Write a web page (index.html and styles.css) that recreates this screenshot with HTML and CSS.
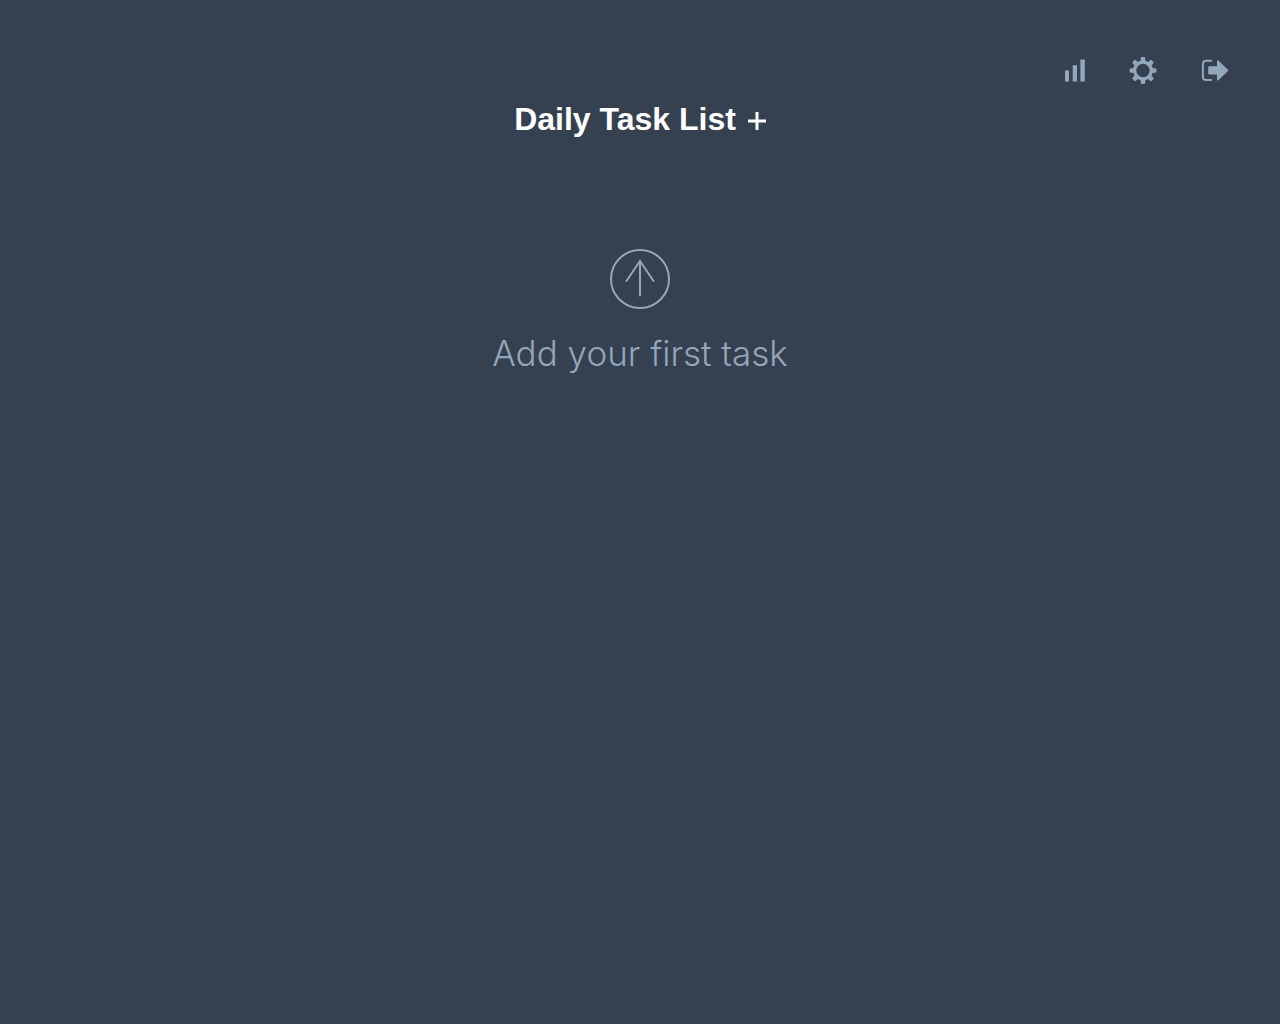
FILE: index.html
```html
<!DOCTYPE html>
<html lang="en">
<head>
<meta charset="utf-8">
<meta name="viewport" content="width=device-width, initial-scale=1">
<title>Daily Task List</title>
<link rel="stylesheet" href="styles.css">
</head>
<body>
<nav class="toolbar" aria-label="Main">
  <button class="icon-button" type="button" aria-label="Statistics">
    <svg width="20" height="28" viewBox="0 0 20 28" fill="currentColor" aria-hidden="true">
      <path d="M0 14.5h4v11H0zM7.7 9.2h4.3v16.3H7.7zM15.4 3.6h4.4v21.9h-4.4z"/>
    </svg>
  </button>
  <button class="icon-button" type="button" aria-label="Settings">
    <svg width="28" height="28" viewBox="0 0 28 28" aria-hidden="true">
      <g transform="translate(14 14.5)">
        <circle r="8.3" fill="none" stroke="currentColor" stroke-width="3.2"/>
        <g fill="currentColor">
          <path id="tooth" d="M-2.6 -9L-2 -13.1Q-1.9 -13.4 -1.5 -13.4H1.5Q1.9 -13.4 2 -13.1L2.6 -9z"/>
          <use href="#tooth" transform="rotate(45)"/>
          <use href="#tooth" transform="rotate(90)"/>
          <use href="#tooth" transform="rotate(135)"/>
          <use href="#tooth" transform="rotate(180)"/>
          <use href="#tooth" transform="rotate(225)"/>
          <use href="#tooth" transform="rotate(270)"/>
          <use href="#tooth" transform="rotate(315)"/>
        </g>
      </g>
    </svg>
  </button>
  <button class="icon-button" type="button" aria-label="Log out">
    <svg width="28" height="28" viewBox="0 0 28 28" aria-hidden="true">
      <path d="M10.3 4.7H5.4Q1.9 4.7 1.9 8.2V20.6Q1.9 24.1 5.4 24.1H10.3" fill="none" stroke="currentColor" stroke-width="2" stroke-linecap="round"/>
      <path d="M7.2 11.2Q7.2 10.2 8.2 10.2H16V5.4Q16 3.4 17.5 4.8L26.8 13.6Q27.6 14.4 26.8 15.2L17.5 24.1Q16 25.4 16 23.4V18.6H8.2Q7.2 18.6 7.2 17.6z" fill="currentColor"/>
    </svg>
  </button>
</nav>
<main class="content">
  <header class="list-header">
    <h1 class="list-title">Daily Task List</h1>
    <button class="add-button" type="button" aria-label="Add task">
      <svg width="18" height="18" viewBox="0 0 18 18" fill="currentColor" aria-hidden="true">
        <path d="M0 7.6h7.5V0h3v7.6H18v2.9h-7.5V18h-3v-7.5H0z"/>
      </svg>
    </button>
  </header>
  <section class="empty-state">
    <svg width="60" height="60" viewBox="0 0 60 60" fill="none" stroke="currentColor" stroke-width="2" aria-hidden="true">
      <circle cx="30" cy="30" r="29"/>
      <path d="M30 46.5V12M16.5 32L30 12L43.5 32" stroke-linecap="round"/>
    </svg>
    <p class="empty-text">Add your first task</p>
  </section>
</main>
</body>
</html>
```
FILE: styles.css
```css
* {
  box-sizing: border-box;
}

body {
  margin: 0;
  min-height: 100vh;
  background: #354150;
  color: #93a6ba;
  font-family: "Liberation Sans", Arial, sans-serif;
}

button {
  display: flex;
  padding: 0;
  border: 0;
  background: none;
  color: inherit;
  cursor: pointer;
}

.toolbar {
  display: flex;
  justify-content: flex-end;
  gap: 44px;
  padding: 56px 51px 0;
}

.content {
  display: flex;
  flex-direction: column;
  align-items: center;
  padding: 15px 24px 48px;
}

.list-header {
  display: flex;
  align-items: center;
  gap: 12px;
  color: #fff;
}

.list-title {
  margin: 0;
  font-size: 32px;
  line-height: 40px;
  font-weight: 700;
}

.add-button {
  padding-top: 4px;
}

.empty-state {
  display: flex;
  flex-direction: column;
  align-items: center;
  gap: 20px;
  padding-top: 110px;
}

.empty-text {
  margin: 0;
  font-family: Inter, "Liberation Sans", sans-serif;
  font-size: 35px;
  line-height: 48px;
  font-weight: 300;
}
```
